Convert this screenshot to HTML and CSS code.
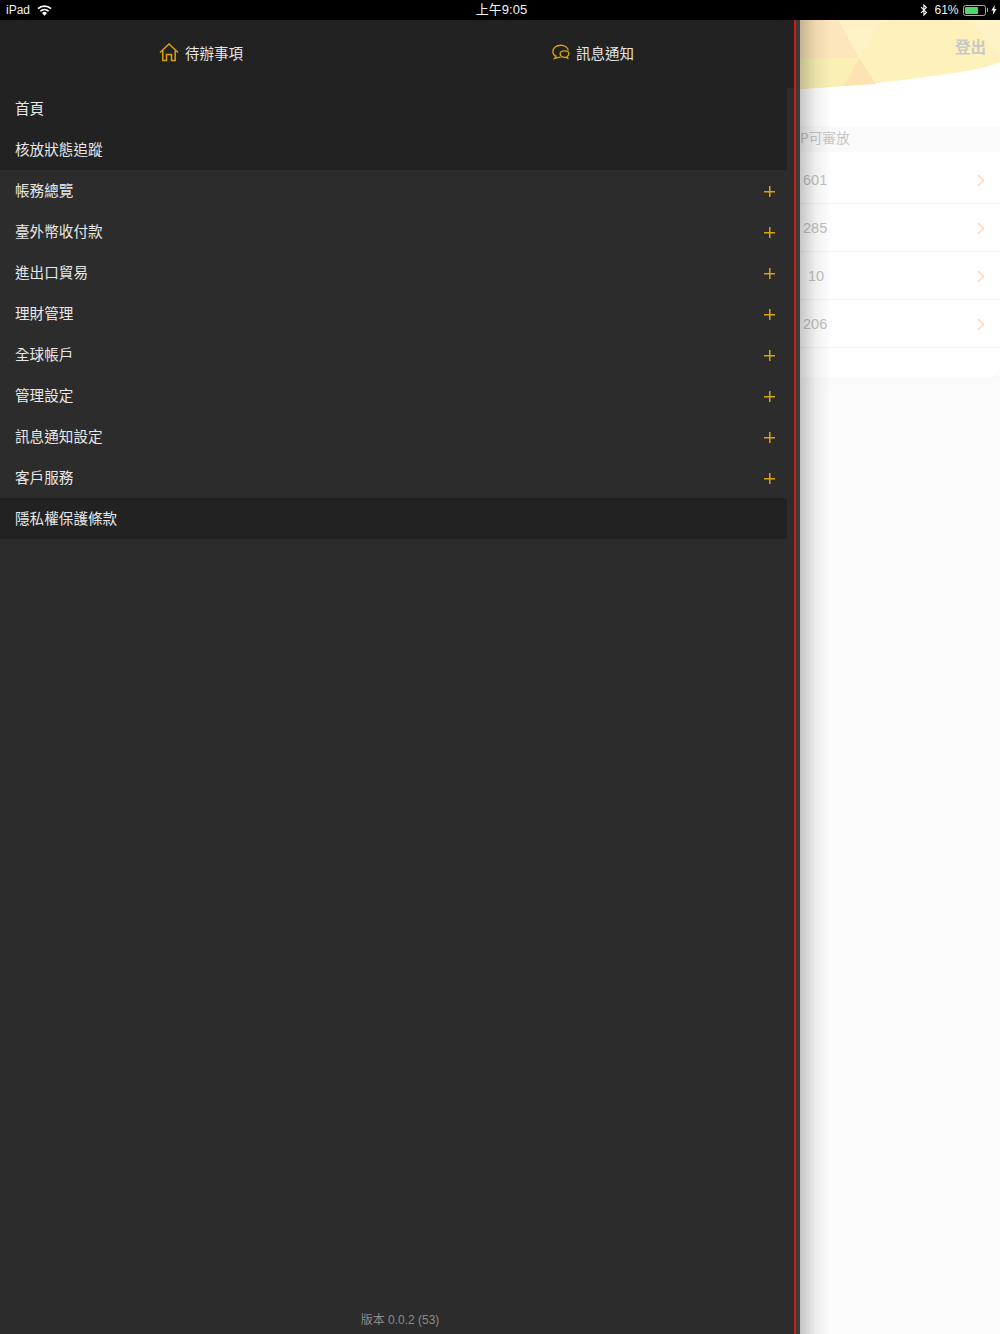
FILE: index.html
```html
<!DOCTYPE html>
<html lang="zh-Hant">
<head>
<meta charset="utf-8">
<title>選單</title>
<link rel="stylesheet" href="styles.css">
</head>
<body>
<div class="statusbar">
  <div class="sb-left">
    <span>iPad</span>
    <svg class="wifi" width="15" height="11" viewBox="0 0 15 11"><path d="M7.500 10.800 5 7.900a3.700 3.700 0 0 1 5 0Z" fill="#fff"/><path d="M3.400 6.200a6.100 6.100 0 0 1 8.200 0" fill="none" stroke="#fff" stroke-width="1.700"/><path d="M1 3.600a9.800 9.800 0 0 1 13 0" fill="none" stroke="#fff" stroke-width="1.700"/></svg>
  </div>
  <div class="sb-center">上午9:05</div>
  <div class="sb-right">
    <svg class="bt" width="8" height="12" viewBox="0 0 8 12"><path d="M1 3.200 6.400 8.400 3.900 11V1l2.500 2.600L1 8.800" fill="none" stroke="#fff" stroke-width="1.100"/></svg>
    <span class="pct">61%</span>
    <span class="battery"><span class="battery-fill"></span></span>
    <span class="battery-cap"></span>
    <svg class="bolt" width="6" height="10" viewBox="0 0 6 10"><path d="M3.800 0 .4 5.600h2L1.800 10l3.800-6H3.300Z" fill="#fff"/></svg>
  </div>
</div>
<div class="screen">
  <aside class="drawer">
    <div class="drawer-main">
      <header class="tabs">
        <div class="tab tab-home">
          <svg width="20" height="19" viewBox="0 0 20 19"><path d="M1 9.500 10 1l9 8.500M3.800 7.500V17.500H7.500V11.500H12.500V17.500H16.200V7.500" fill="none" stroke="#d9a00f" stroke-width="1.500"/></svg>
          <span>待辦事項</span>
        </div>
        <div class="tab tab-msg">
          <svg width="18" height="16" viewBox="0 0 20 17"><path d="M5 13.500C2.500 12.500 1 10.800 1 8 1 3.800 5 1 9.500 1 14 1 18 3.500 18 6.800M5 13.500 3 15.500 7.500 14.500 9.500 14.500" fill="none" stroke="#d9a00f" stroke-width="1.500"/><path d="M9 10.500C9 8.500 11 7.200 13.800 7.200 16.800 7.200 18.800 8.500 18.800 10.500 18.800 11.800 18 12.800 17 13.400L17.500 15.500 15 14.300C12 14.800 9 13.200 9 10.500Z" fill="none" stroke="#d9a00f" stroke-width="1.500"/></svg>
          <span>訊息通知</span>
        </div>
      </header>
      <nav class="menu">
        <a class="row dark">首頁</a>
        <a class="row dark">核放狀態追蹤</a>
        <a class="row">帳務總覽<span class="plus"></span></a>
        <a class="row">臺外幣收付款<span class="plus"></span></a>
        <a class="row">進出口貿易<span class="plus"></span></a>
        <a class="row">理財管理<span class="plus"></span></a>
        <a class="row">全球帳戶<span class="plus"></span></a>
        <a class="row">管理設定<span class="plus"></span></a>
        <a class="row">訊息通知設定<span class="plus"></span></a>
        <a class="row">客戶服務<span class="plus"></span></a>
        <a class="row dark">隱私權保護條款</a>
      </nav>
      <footer class="version">版本 0.0.2 (53)</footer>
    </div>
    <div class="red-line"></div>
  </aside>
  <main class="panel">
    <div class="hero">
      <svg class="hero-bg" width="200" height="80" viewBox="0 0 200 80"><path d="M0 0H200V42C190 47 170 51 140 55 110 59 70 65 0 69Z" fill="#fef1bb"/><path d="M38 0H82L59 38Z" fill="#fef2c6"/><path d="M172 0H200V38Z" fill="#fef3c6"/><path d="M0 0H38L59 38H0Z" fill="#fde6bb"/><path d="M0 38H59L44 66C30 67 15 68 0 69Z" fill="#faf0b4"/><path d="M59 38 76 64 44 66Z" fill="#fde3b2"/></svg>
      <span class="logout">登出</span>
    </div>
    <div class="card">
      <div class="section">P可審放</div>
      <div class="item first"><span class="num">601</span><svg class="chev" width="8" height="13" viewBox="0 0 8 13"><path d="M1 1 6.500 6.500 1 12" fill="none" stroke="#fcd9b4" stroke-width="1.500"/></svg></div>
      <div class="item"><span class="num">285</span><svg class="chev" width="8" height="13" viewBox="0 0 8 13"><path d="M1 1 6.500 6.500 1 12" fill="none" stroke="#fcd9b4" stroke-width="1.500"/></svg></div>
      <div class="item"><span class="num num-short">10</span><svg class="chev" width="8" height="13" viewBox="0 0 8 13"><path d="M1 1 6.500 6.500 1 12" fill="none" stroke="#fcd9b4" stroke-width="1.500"/></svg></div>
      <div class="item"><span class="num">206</span><svg class="chev" width="8" height="13" viewBox="0 0 8 13"><path d="M1 1 6.500 6.500 1 12" fill="none" stroke="#fcd9b4" stroke-width="1.500"/></svg></div>
    </div>
    <div class="shadow"></div>
  </main>
</div>
</body>
</html>
```
FILE: styles.css
```css
* { box-sizing: border-box; }
html, body { margin: 0; padding: 0; }
body {
  width: 1000px;
  height: 1334px;
  overflow: hidden;
  background: #fcfcfc;
  font-family: "Noto Sans CJK TC", "Liberation Sans", sans-serif;
}
.statusbar {
  height: 20px;
  background: #000;
  color: #f0f0f0;
  font: 12px/20px "Liberation Sans", "Noto Sans CJK TC", sans-serif;
  display: grid;
  grid-template-columns: 1fr auto 1fr;
  align-items: center;
  padding: 0 3px 0 6px;
}
.sb-left { display: flex; align-items: center; gap: 7px; }
.sb-center { padding-right: 2px; padding-left: 2px; color: #f4f4f4; font-size: 13px; }
.sb-right { display: flex; align-items: center; justify-content: flex-end; }
.bt { margin-right: 6px; }
.pct { margin-right: 4px; }
.battery {
  width: 23px; height: 11px;
  border: 1px solid #aaa;
  border-radius: 2.500px;
  padding: 1px;
  display: flex;
}
.battery-fill { width: 13px; background: #4cd964; border-radius: 1px; }
.battery-cap { width: 1.500px; height: 4px; background: #aaa; margin-right: 3px; margin-left: 1px; }
.screen { display: flex; height: 1314px; }
.drawer { width: 800px; display: flex; background: #3a3a3a; flex: none; padding-right: 4px; }
.drawer-main {
  width: 794px;
  display: flex;
  flex-direction: column;
  background: #2c2c2c;
}
.red-line { width: 2px; background: #d41a0c; }
.tabs {
  height: 68px;
  background: #222;
  display: flex;
  padding-bottom: 4px;
}
.tab {
  display: flex;
  align-items: center;
  color: #e6e6e6;
  font-size: 14.500px;
  position: relative;
}
.tab-home { margin-left: 159px; gap: 6px; }
.tab-msg { margin-left: 309px; gap: 6px; }
.menu { width: 787px; display: flex; flex-direction: column; }
.row {
  height: 41px;
  display: flex;
  align-items: center;
  justify-content: space-between;
  padding: 0 12px 3px 15px;
  color: #e8e8e8;
  font-size: 14.600px;
  background: #2c2c2c;
}
.row.dark { background: #222; }
.plus {
  width: 11px; height: 11px;
  margin-top: 5px;
  background:
    linear-gradient(#d9a20f, #d9a20f) center / 100% 1.500px no-repeat,
    linear-gradient(#d9a20f, #d9a20f) center / 1.500px 100% no-repeat;
}
.version {
  margin-top: auto;
  height: 27px;
  text-align: center;
  color: #8a8a8a;
  font: 12px/27px "Liberation Sans", "Noto Sans CJK TC", sans-serif;
  padding-left: 6px;
}
.panel {
  width: 200px;
  height: 1314px;
  position: relative;
  overflow: hidden;
  background: #fcfcfc;
}
.hero { height: 106px; background: #fff; display: flex; justify-content: flex-end; position: relative; }
.hero-bg { position: absolute; left: 0; top: 0; }
.logout {
  position: relative;
  margin: 15px 14px 0 0;
  height: 22px;
  color: #c9c9c6;
  font-size: 15.500px;
  font-weight: 700;
  line-height: 22px;
}
.card {
  background: #fff;
  border-bottom-right-radius: 12px;
  height: 251px;
  box-shadow: 0 6px 10px rgba(0, 0, 0, .01);
}
.section {
  height: 26px;
  background: #fafafa;
  color: #c6c6c6;
  font-size: 13.700px;
  line-height: 23px;
}
.item {
  height: 48px;
  display: flex;
  align-items: center;
  justify-content: space-between;
  padding: 0 15px 0 3px;
  border-bottom: 1px solid #f5f5f5;
}
.item.first { height: 52px; padding-top: 4px; }
.num {
  color: #c2c2c2;
  font: 14.500px/20px "Liberation Sans", sans-serif;
}
.num-short { margin-left: 5px; }
.chev { margin-top: 2px; }
.shadow {
  position: absolute;
  left: 0; top: 0; bottom: 0;
  width: 32px;
  background: linear-gradient(to right, rgba(0, 0, 0, .22), rgba(0, 0, 0, .06) 50%, rgba(0, 0, 0, 0));
}
```
